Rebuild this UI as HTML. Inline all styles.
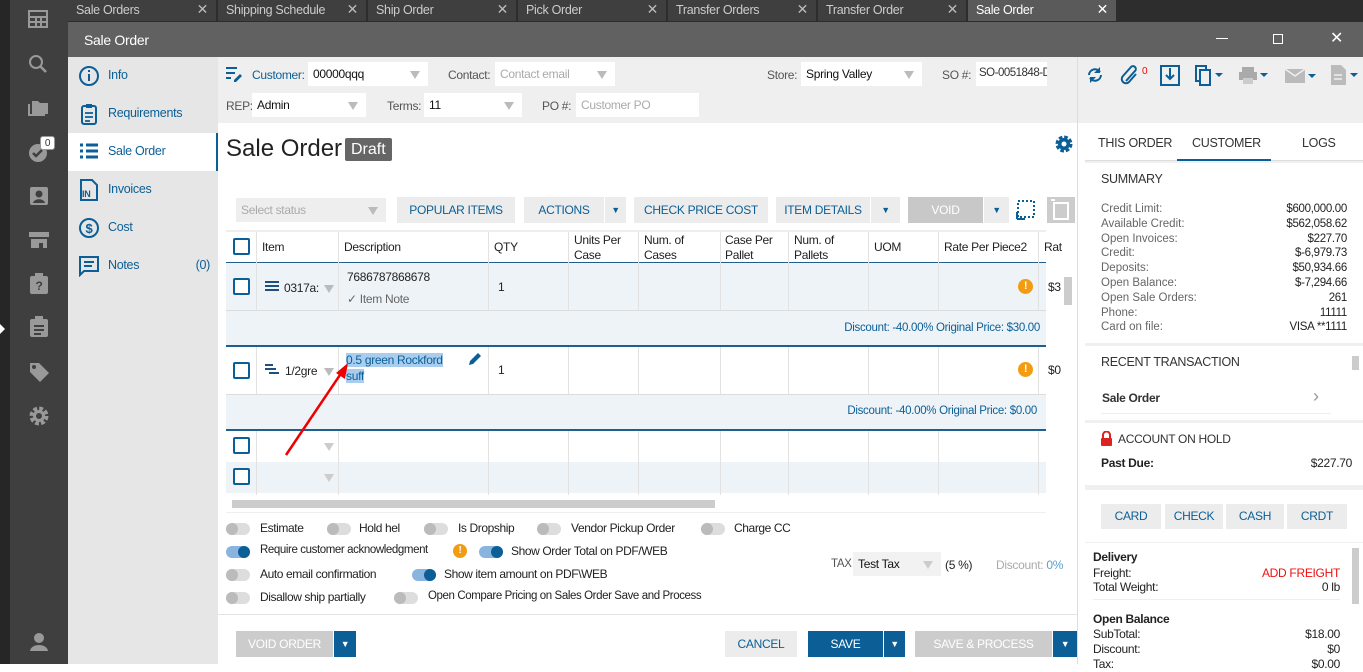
<!DOCTYPE html><html><head><meta charset="utf-8"><style>
*{box-sizing:border-box;margin:0;padding:0}
body{width:1363px;height:664px;overflow:hidden;font-family:"Liberation Sans",sans-serif;font-size:12px;background:#fff;position:relative;color:#222;white-space:nowrap;letter-spacing:-0.3px}
.a{position:absolute}
.tab{position:absolute;top:0;height:21px;width:149px;background:#3f3f3f;color:#ccc;font-size:12.5px;padding:3px 8px;border-right:1px solid #2d2d2d}
.tab .x{position:absolute;right:8px;top:1px;font-size:14px;color:#bbb}
.nav{position:absolute;left:68px;width:150px;height:38px;color:#0b5f96;font-size:12.5px;padding:11px 0 0 40px}
.nav svg{position:absolute;left:10px;top:8px}
.lbl{position:absolute;color:#555;font-size:12px}
.inp{position:absolute;background:#fff;height:24px;font-size:12px;padding:5px 5px;color:#111;overflow:hidden}
.inp .dd{position:absolute;right:8px;top:9px;width:0;height:0;border-left:5px solid transparent;border-right:5px solid transparent;border-top:8px solid #bbb}
.btn{position:absolute;top:197px;height:26px;background:#ececec;color:#0b5f96;font-size:12px;text-align:center;line-height:26px}
.cb{position:absolute;width:17px;height:17px;border:2px solid #0b5f96;border-radius:2px;background:#fff}
.th{position:absolute;top:233px;font-size:12px;color:#222;line-height:15px}
.vl{position:absolute;width:1px;background:#e2e2e2}
.tg{position:absolute;width:24px;height:12px;border-radius:6px;background:#ddd}
.tg i{position:absolute;top:0;left:0;width:12px;height:12px;border-radius:6px;background:#bbb}
.tg.on{background:#8ab4e0}.tg.on i{left:12px;background:#0b5f96}
.tl{position:absolute;font-size:12px;color:#222;letter-spacing:-0.4px}
.rp{position:absolute;font-size:11.5px;color:#666}
.rv{position:absolute;font-size:11.5px;color:#222;text-align:right}
</style></head><body>
<div class="a" style="left:0;top:0;width:10px;height:664px;background:#262626"></div>
<div class="a" style="left:10px;top:0;width:58px;height:664px;background:#3f3f3f"></div>
<div class="a" style="left:0;top:324px;width:0;height:0;border-top:5px solid transparent;border-bottom:5px solid transparent;border-left:5px solid #fff"></div>
<svg class="a" style="left:28px;top:10px" width="20" height="18"><rect x="1" y="1" width="18" height="16" fill="none" stroke="#999" stroke-width="2"/><line x1="1" y1="7" x2="19" y2="7" stroke="#999" stroke-width="2"/><line x1="1" y1="12" x2="19" y2="12" stroke="#999" stroke-width="2"/><line x1="8" y1="7" x2="8" y2="17" stroke="#999" stroke-width="2"/><line x1="13" y1="7" x2="13" y2="17" stroke="#999" stroke-width="2"/></svg>
<svg class="a" style="left:28px;top:54px" width="20" height="20"><circle cx="8" cy="8" r="6" fill="none" stroke="#999" stroke-width="2"/><line x1="12" y1="12" x2="18" y2="18" stroke="#999" stroke-width="2.5"/></svg>
<svg class="a" style="left:28px;top:98px" width="22" height="18"><path d="M4 3h6l2 2h8v11H4z" fill="#999"/><path d="M1 6v11h16" fill="none" stroke="#999" stroke-width="2"/></svg>
<svg class="a" style="left:28px;top:141px" width="22" height="22"><circle cx="10" cy="12" r="9" fill="#999"/><path d="M5 12l3 3 6-6" stroke="#3f3f3f" stroke-width="2.5" fill="none"/></svg>
<div class="a" style="left:40px;top:136px;width:15px;height:14px;background:#fff;border-radius:3px;font-size:10px;text-align:center;line-height:14px;color:#333;border:1px solid #999">0</div>
<svg class="a" style="left:29px;top:186px" width="20" height="20"><rect x="1" y="1" width="18" height="18" rx="2" fill="#999"/><circle cx="10" cy="8" r="3.5" fill="#3f3f3f"/><path d="M4 17c1-5 11-5 12 0z" fill="#3f3f3f"/></svg>
<svg class="a" style="left:28px;top:231px" width="22" height="18"><path d="M1 1h20v5H1z M3 8h16v9h-4v-5h-4v5H3z" fill="#999"/></svg>
<svg class="a" style="left:29px;top:273px" width="20" height="22"><rect x="1" y="3" width="18" height="18" rx="2" fill="#999"/><rect x="6" y="0" width="8" height="5" fill="#999"/><text x="10" y="17" font-size="12" font-weight="bold" fill="#3f3f3f" text-anchor="middle" font-family="Liberation Sans">?</text></svg>
<svg class="a" style="left:29px;top:316px" width="20" height="22"><rect x="1" y="3" width="18" height="18" rx="2" fill="#999"/><rect x="6" y="0" width="8" height="5" fill="#999"/><path d="M5 10h10M5 14h10M5 18h7" stroke="#3f3f3f" stroke-width="2"/></svg>
<svg class="a" style="left:28px;top:361px" width="22" height="22"><path d="M2 2h9l10 10-9 9L2 11z" fill="#999"/><circle cx="6" cy="6" r="2" fill="#3f3f3f"/></svg>
<svg class="a" style="left:28px;top:405px" width="22" height="22"><circle cx="11" cy="11" r="7" fill="none" stroke="#999" stroke-width="5" stroke-dasharray="3.5 2"/><circle cx="11" cy="11" r="6" fill="#999"/><circle cx="11" cy="11" r="3" fill="#3f3f3f"/></svg>
<svg class="a" style="left:29px;top:632px" width="20" height="20"><circle cx="10" cy="6" r="5" fill="#999"/><path d="M1 19c1-8 17-8 18 0z" fill="#999"/></svg>
<div class="a" style="left:68px;top:0;width:1295px;height:22px;background:#2d2d2d"></div>
<div class="tab" style="left:68px">Sale Orders<span class="x">✕</span></div>
<div class="tab" style="left:218px">Shipping Schedule<span class="x">✕</span></div>
<div class="tab" style="left:368px">Ship Order<span class="x">✕</span></div>
<div class="tab" style="left:518px">Pick Order<span class="x">✕</span></div>
<div class="tab" style="left:668px">Transfer Orders<span class="x">✕</span></div>
<div class="tab" style="left:818px">Transfer Order<span class="x">✕</span></div>
<div class="tab" style="left:968px;background:#5a5a5a;color:#fff">Sale Order<span class="x" style="color:#fff">✕</span></div>
<div class="a" style="left:68px;top:22px;width:1295px;height:35px;background:#616161;color:#fff;font-size:14px;padding:10px 16px">Sale Order</div>
<div class="a" style="left:1216px;top:38px;width:12px;height:1px;background:#fff"></div>
<div class="a" style="left:1273px;top:34px;width:10px;height:10px;border:1px solid #fff"></div>
<div class="a" style="left:1330px;top:28px;color:#fff;font-size:16px">✕</div>
<div class="a" style="left:68px;top:57px;width:150px;height:607px;background:#e6e6e6"></div>
<div class="nav" style="top:57px"><svg width="22" height="22"><circle cx="11" cy="11" r="9" fill="none" stroke="#0b5f96" stroke-width="2"/><rect x="10" y="9" width="2" height="7" fill="#0b5f96"/><rect x="10" y="5" width="2" height="2" fill="#0b5f96"/></svg>Info</div>
<div class="nav" style="top:95px"><svg width="22" height="22"><rect x="4" y="3" width="14" height="18" rx="2" fill="none" stroke="#0b5f96" stroke-width="2"/><rect x="8" y="1" width="6" height="4" fill="#0b5f96"/><path d="M7 10h8M7 14h8M7 18h5" stroke="#0b5f96" stroke-width="1.8"/></svg>Requirements</div>
<div class="nav" style="top:133px;background:#fff;border-right:2px solid #0b5f96"><svg width="22" height="22"><path d="M2 4h3M8 4h12M2 10h3M8 10h12M2 16h3M8 16h12" stroke="#0b5f96" stroke-width="3"/></svg>Sale Order</div>
<div class="nav" style="top:171px"><svg width="22" height="22"><path d="M3 1h11l5 5v15H3z" fill="none" stroke="#0b5f96" stroke-width="2"/><text x="4" y="18" font-size="9" font-weight="bold" fill="#0b5f96" font-family="Liberation Sans">IN</text></svg>Invoices</div>
<div class="nav" style="top:209px"><svg width="22" height="22"><circle cx="11" cy="11" r="9" fill="none" stroke="#0b5f96" stroke-width="2"/><text x="11" y="16" font-size="13" font-weight="bold" fill="#0b5f96" text-anchor="middle" font-family="Liberation Sans">$</text></svg>Cost</div>
<div class="nav" style="top:247px"><svg width="22" height="22"><path d="M2 2h18v14H6l-4 4z" fill="none" stroke="#0b5f96" stroke-width="2"/><path d="M6 7h10M6 11h8" stroke="#0b5f96" stroke-width="2"/></svg>Notes<span style="position:absolute;right:8px">(0)</span></div>
<div class="a" style="left:218px;top:57px;width:1145px;height:66px;background:#efefef"></div>
<div class="a" style="left:1077px;top:57px;width:1px;height:607px;background:#ddd"></div>
<svg class="a" style="left:225px;top:66px" width="18" height="16"><path d="M1 2h11M1 7h9M1 12h5" stroke="#0b5f96" stroke-width="2"/><path d="M9 14l6-6 2 2-6 6H9z" fill="#0b5f96"/></svg>
<div class="lbl" style="left:252px;top:68px;color:#0b5f96">Customer:</div>
<div class="inp" style="left:308px;top:62px;width:120px">00000qqq<span class="dd"></span></div>
<div class="lbl" style="left:448px;top:68px">Contact:</div>
<div class="inp" style="left:495px;top:62px;width:120px;color:#aaa">Contact email<span class="dd"></span></div>
<div class="lbl" style="left:767px;top:68px">Store:</div>
<div class="inp" style="left:801px;top:62px;width:121px">Spring Valley<span class="dd"></span></div>
<div class="lbl" style="left:942px;top:68px">SO #:</div>
<div class="inp" style="left:976px;top:62px;width:71px;color:#333;font-size:11.5px;padding:5px 3px;letter-spacing:-0.5px">SO-0051848-D</div>
<div class="lbl" style="left:226px;top:99px">REP:</div>
<div class="inp" style="left:252px;top:93px;width:114px">Admin<span class="dd"></span></div>
<div class="lbl" style="left:387px;top:99px">Terms:</div>
<div class="inp" style="left:424px;top:93px;width:98px">11<span class="dd"></span></div>
<div class="lbl" style="left:542px;top:99px">PO #:</div>
<div class="inp" style="left:576px;top:93px;width:123px;color:#aaa">Customer PO</div>
<svg class="a" style="left:1086px;top:66px" width="18" height="18"><path d="M3 9a6 6 0 0 1 11-3M15 9a6 6 0 0 1-11 3" fill="none" stroke="#0b5f96" stroke-width="2"/><path d="M14 1v6H8zM4 17v-6h6z" fill="#0b5f96"/></svg>
<svg class="a" style="left:1120px;top:65px" width="20" height="20"><path d="M6 16L15 6a2.5 2.5 0 0 0-4-4L3 11a4 4 0 0 0 6 6l7-8" fill="none" stroke="#0b5f96" stroke-width="2"/></svg>
<div class="a" style="left:1142px;top:66px;color:red;font-size:10px">0</div>
<svg class="a" style="left:1160px;top:64px" width="20" height="22"><rect x="1" y="2" width="18" height="19" fill="none" stroke="#0b5f96" stroke-width="2"/><path d="M10 4v11M6 11l4 4 4-4" stroke="#0b5f96" stroke-width="2" fill="none"/></svg>
<svg class="a" style="left:1195px;top:65px" width="32" height="22"><rect x="1" y="1" width="10" height="15" fill="none" stroke="#0b5f96" stroke-width="2"/><rect x="5" y="5" width="10" height="15" fill="#efefef" stroke="#0b5f96" stroke-width="2"/><path d="M20 8h8l-4 4z" fill="#0b5f96"/></svg>
<svg class="a" style="left:1238px;top:66px" width="32" height="20"><rect x="4" y="1" width="12" height="5" fill="#aaa"/><rect x="1" y="6" width="18" height="8" fill="#aaa"/><rect x="5" y="12" width="10" height="6" fill="#ccc"/><path d="M22 7h8l-4 4z" fill="#0b5f96"/></svg>
<svg class="a" style="left:1284px;top:68px" width="32" height="16"><rect x="1" y="1" width="20" height="14" fill="#bbb"/><path d="M1 1l10 7 10-7" stroke="#efefef" fill="none" stroke-width="1.5"/><path d="M24 6h8l-4 4z" fill="#0b5f96"/></svg>
<svg class="a" style="left:1330px;top:64px" width="33" height="22"><path d="M1 1h10l5 5v15H1z" fill="#bbb"/><path d="M4 11h8M4 15h8" stroke="#efefef" stroke-width="1.5"/><path d="M20 9h8l-4 4z" fill="#0b5f96"/></svg>
<div class="a" style="left:226px;top:135px;font-size:24px;color:#222;letter-spacing:0">Sale Order</div>
<div class="a" style="left:345px;top:138px;background:#666;color:#fff;font-size:16px;padding:0 6px;height:23px;line-height:23px;border-radius:2px;letter-spacing:0">Draft</div>
<svg class="a" style="left:1054px;top:134px" width="20" height="20"><circle cx="10" cy="10" r="6.5" fill="none" stroke="#0b5f96" stroke-width="4" stroke-dasharray="3.4 1.7"/><circle cx="10" cy="10" r="6" fill="#0b5f96"/><circle cx="10" cy="10" r="2.5" fill="#fff"/></svg>
<div class="inp" style="left:236px;top:198px;width:150px;background:#eee;color:#aaa;font-size:12px">Select status<span class="dd"></span></div>
<div class="btn" style="left:397px;width:118px">POPULAR ITEMS</div>
<div class="btn" style="left:524px;width:80px">ACTIONS</div>
<div class="btn" style="left:605px;width:21px;font-size:9px">▼</div>
<div class="btn" style="left:634px;width:134px">CHECK PRICE COST</div>
<div class="btn" style="left:776px;width:94px">ITEM DETAILS</div>
<div class="btn" style="left:871px;width:29px;font-size:9px">▼</div>
<div class="btn" style="left:908px;width:75px;background:#c8c8c8;color:#fff">VOID</div>
<div class="btn" style="left:984px;width:25px;font-size:9px">▼</div>
<div class="btn" style="left:1014px;width:24px;background:#fff"><svg width="20" height="22" style="margin-top:2px"><rect x="2" y="2" width="16" height="16" fill="none" stroke="#0b5f96" stroke-width="2" stroke-dasharray="2 2"/><path d="M1 20h8M1 13v7" stroke="#0b5f96" stroke-width="2"/></svg></div>
<div class="btn" style="left:1047px;width:28px;background:#ccc"><svg width="22" height="22" style="margin-top:2px"><rect x="4" y="4" width="14" height="16" fill="none" stroke="#fff" stroke-width="2"/><path d="M1 1h4" stroke="#fff" stroke-width="2"/></svg></div>
<div class="a" style="left:226px;top:230px;width:820px;height:2px;background:#eee"></div>
<div class="a" style="left:226px;top:262px;width:820px;height:48px;background:#edf3f7;border-top:1px solid #1f5f8f"></div>
<div class="a" style="left:226px;top:310px;width:820px;height:37px;background:#edf3f7;border-top:1px solid #ddd;border-bottom:2px solid #1f5f8f"></div>
<div class="a" style="left:226px;top:394px;width:820px;height:37px;background:#edf3f7;border-top:1px solid #ddd;border-bottom:2px solid #1f5f8f"></div>
<div class="a" style="left:226px;top:462px;width:820px;height:31px;background:#edf3f7"></div>
<div class="vl" style="left:256px;top:232px;height:30px"></div><div class="vl" style="left:338px;top:232px;height:30px"></div><div class="vl" style="left:488px;top:232px;height:30px"></div><div class="vl" style="left:568px;top:232px;height:30px"></div><div class="vl" style="left:638px;top:232px;height:30px"></div><div class="vl" style="left:720px;top:232px;height:30px"></div><div class="vl" style="left:788px;top:232px;height:30px"></div><div class="vl" style="left:868px;top:232px;height:30px"></div><div class="vl" style="left:938px;top:232px;height:30px"></div><div class="vl" style="left:1038px;top:232px;height:30px"></div>
<div class="vl" style="left:256px;top:262px;height:48px"></div><div class="vl" style="left:338px;top:262px;height:48px"></div><div class="vl" style="left:488px;top:262px;height:48px"></div><div class="vl" style="left:568px;top:262px;height:48px"></div><div class="vl" style="left:638px;top:262px;height:48px"></div><div class="vl" style="left:720px;top:262px;height:48px"></div><div class="vl" style="left:788px;top:262px;height:48px"></div><div class="vl" style="left:868px;top:262px;height:48px"></div><div class="vl" style="left:938px;top:262px;height:48px"></div><div class="vl" style="left:1038px;top:262px;height:48px"></div>
<div class="vl" style="left:256px;top:347px;height:47px"></div><div class="vl" style="left:338px;top:347px;height:47px"></div><div class="vl" style="left:488px;top:347px;height:47px"></div><div class="vl" style="left:568px;top:347px;height:47px"></div><div class="vl" style="left:638px;top:347px;height:47px"></div><div class="vl" style="left:720px;top:347px;height:47px"></div><div class="vl" style="left:788px;top:347px;height:47px"></div><div class="vl" style="left:868px;top:347px;height:47px"></div><div class="vl" style="left:938px;top:347px;height:47px"></div><div class="vl" style="left:1038px;top:347px;height:47px"></div>
<div class="vl" style="left:256px;top:431px;height:64px"></div><div class="vl" style="left:338px;top:431px;height:64px"></div><div class="vl" style="left:488px;top:431px;height:64px"></div><div class="vl" style="left:568px;top:431px;height:64px"></div><div class="vl" style="left:638px;top:431px;height:64px"></div><div class="vl" style="left:720px;top:431px;height:64px"></div><div class="vl" style="left:788px;top:431px;height:64px"></div><div class="vl" style="left:868px;top:431px;height:64px"></div><div class="vl" style="left:938px;top:431px;height:64px"></div><div class="vl" style="left:1038px;top:431px;height:64px"></div>
<div class="cb" style="left:233px;top:238px"></div>
<div class="th" style="left:262px;top:240px">Item</div><div class="th" style="left:344px;top:240px">Description</div><div class="th" style="left:494px;top:240px">QTY</div>
<div class="th" style="left:574px">Units Per<br>Case</div><div class="th" style="left:644px">Num. of<br>Cases</div><div class="th" style="left:725px">Case Per<br>Pallet</div><div class="th" style="left:794px">Num. of<br>Pallets</div>
<div class="th" style="left:874px;top:240px">UOM</div><div class="th" style="left:944px;top:240px">Rate Per Piece2</div><div class="th" style="left:1044px;top:240px">Rat</div>
<div class="cb" style="left:233px;top:278px"></div>
<svg class="a" style="left:265px;top:281px" width="14" height="12"><path d="M0 1h14M0 5h14M0 9h14" stroke="#1f4f7f" stroke-width="2"/></svg>
<div class="a" style="left:284px;top:281px;font-size:12px;width:36px;overflow:hidden">0317a:</div>
<div class="a" style="left:324px;top:285px;border-left:5px solid transparent;border-right:5px solid transparent;border-top:8px solid #bbb"></div>
<div class="a" style="left:347px;top:270px;font-size:12px">7686787868678</div>
<div class="a" style="left:347px;top:292px;font-size:12px;color:#666">✓ Item Note</div>
<div class="a" style="left:498px;top:280px">1</div>
<div class="a" style="left:1018px;top:279px;width:15px;height:15px;border-radius:8px;background:#f39c12;color:#fff;font-size:11px;font-weight:bold;text-align:center;line-height:15px">!</div>
<div class="a" style="left:1048px;top:280px">$3</div>
<div class="a" style="left:1040px;top:322px;color:#0b5f96;font-size:11.5px;transform:translateX(-100%)">Discount: -40.00% Original Price: $30.00</div>
<div class="cb" style="left:233px;top:362px"></div>
<svg class="a" style="left:265px;top:364px" width="14" height="12"><path d="M0 1h8M0 5h11M4 9h10" stroke="#1f4f7f" stroke-width="2"/></svg>
<div class="a" style="left:285px;top:364px;width:35px;overflow:hidden">1/2gre</div>
<div class="a" style="left:324px;top:368px;border-left:5px solid transparent;border-right:5px solid transparent;border-top:8px solid #bbb"></div>
<div class="a" style="left:346px;top:352px;font-size:12px;line-height:16px;color:#0b5f96"><span style="background:#a9cdee">0.5 green Rockford</span><br><span style="background:#a9cdee">suff</span></div>
<svg class="a" style="left:467px;top:351px" width="16" height="16"><path d="M2 14l1-4 8-8 3 3-8 8z" fill="#0b5f96"/></svg>
<div class="a" style="left:498px;top:363px">1</div>
<div class="a" style="left:1018px;top:362px;width:15px;height:15px;border-radius:8px;background:#f39c12;color:#fff;font-size:11px;font-weight:bold;text-align:center;line-height:15px">!</div>
<div class="a" style="left:1048px;top:363px">$0</div>
<div class="a" style="left:1037px;top:405px;color:#0b5f96;font-size:11.5px;transform:translateX(-100%)">Discount: -40.00% Original Price: $0.00</div>
<div class="cb" style="left:233px;top:437px"></div>
<div class="a" style="left:324px;top:443px;border-left:5px solid transparent;border-right:5px solid transparent;border-top:8px solid #ccc"></div>
<div class="cb" style="left:233px;top:468px"></div>
<div class="a" style="left:324px;top:474px;border-left:5px solid transparent;border-right:5px solid transparent;border-top:8px solid #ccc"></div>
<div class="a" style="left:232px;top:500px;width:483px;height:8px;background:#ccc"></div>
<div class="a" style="left:1064px;top:277px;width:8px;height:28px;background:#ccc"></div>
<svg class="a" style="left:226px;top:355px" width="140" height="110"><path d="M60 100L118 14" stroke="#e00" stroke-width="2.5"/><path d="M122 8l-3 16-9-6z" fill="#e00"/></svg>
<div class="a" style="left:226px;top:512px;width:820px;height:1px;background:#eee"></div>
<div class="tg" style="left:226px;top:523px"><i></i></div><div class="tl" style="left:260px;top:521px">Estimate</div>
<div class="tg" style="left:327px;top:523px"><i></i></div><div class="tl" style="left:359px;top:521px">Hold hel</div>
<div class="tg" style="left:424px;top:523px"><i></i></div><div class="tl" style="left:458px;top:521px">Is Dropship</div>
<div class="tg" style="left:537px;top:523px"><i></i></div><div class="tl" style="left:571px;top:521px">Vendor Pickup Order</div>
<div class="tg" style="left:701px;top:523px"><i></i></div><div class="tl" style="left:734px;top:521px">Charge CC</div>
<div class="tg on" style="left:226px;top:546px"><i></i></div><div class="tl" style="left:260px;top:544px;font-size:11.5px">Require customer acknowledgment</div>
<div class="a" style="left:453px;top:544px;width:14px;height:14px;border-radius:7px;background:#f39c12;color:#fff;font-size:10px;font-weight:bold;text-align:center;line-height:14px">!</div>
<div class="tg on" style="left:479px;top:546px"><i></i></div><div class="tl" style="left:511px;top:544px">Show Order Total on PDF/WEB</div>
<div class="tg" style="left:226px;top:569px"><i></i></div><div class="tl" style="left:260px;top:567px">Auto email confirmation</div>
<div class="tg on" style="left:412px;top:569px"><i></i></div><div class="tl" style="left:444px;top:567px">Show item amount on PDF\WEB</div>
<div class="tg" style="left:226px;top:592px"><i></i></div><div class="tl" style="left:260px;top:590px">Disallow ship partially</div>
<div class="tg" style="left:394px;top:592px"><i></i></div><div class="tl" style="left:428px;top:590px;font-size:11.5px">Open Compare Pricing on Sales Order Save and Process</div>
<div class="lbl" style="left:831px;top:558px;font-size:11.5px">TAX</div>
<div class="inp" style="left:853px;top:552px;width:88px;background:#f2f2f2">Test Tax<span class="dd" style="border-top-color:#ccc"></span></div>
<div class="a" style="left:945px;top:558px;font-size:12px">(5 %)</div>
<div class="a" style="left:996px;top:558px;font-size:12px;color:#aaa">Discount: <span style="color:#5aa0d0">0%</span></div>
<div class="a" style="left:218px;top:614px;width:859px;height:1px;background:#e4e4e4"></div>
<div class="a" style="left:236px;top:631px;width:97px;height:26px;background:#ccc;color:#fff;text-align:center;line-height:26px">VOID ORDER</div>
<div class="a" style="left:334px;top:631px;width:22px;height:26px;background:#0b5f96;color:#fff;text-align:center;line-height:26px;font-size:9px">▼</div>
<div class="a" style="left:725px;top:631px;width:72px;height:26px;background:#ececec;color:#0b5f96;text-align:center;line-height:26px">CANCEL</div>
<div class="a" style="left:808px;top:631px;width:75px;height:26px;background:#0b5f96;color:#fff;text-align:center;line-height:26px">SAVE</div>
<div class="a" style="left:884px;top:631px;width:21px;height:26px;background:#0b5f96;color:#fff;text-align:center;line-height:26px;font-size:9px">▼</div>
<div class="a" style="left:915px;top:631px;width:137px;height:26px;background:#ccc;color:#fff;text-align:center;line-height:26px">SAVE &amp; PROCESS</div>
<div class="a" style="left:1053px;top:631px;width:24px;height:26px;background:#0b5f96;color:#fff;text-align:center;line-height:26px;font-size:9px">▼</div>
<div class="a" style="left:1085px;top:123px;width:278px;height:541px;background:#f0f0f0"></div>
<div class="a" style="left:1085px;top:123px;width:278px;height:38px;background:#fff;border-bottom:1px solid #ddd"></div>
<div class="a" style="left:1098px;top:136px;font-size:12.5px;color:#333">THIS ORDER</div>
<div class="a" style="left:1192px;top:136px;font-size:12.5px;color:#333">CUSTOMER</div>
<div class="a" style="left:1177px;top:159px;width:94px;height:2px;background:#0b5f96"></div>
<div class="a" style="left:1302px;top:136px;font-size:12.5px;color:#333">LOGS</div>
<div class="a" style="left:1085px;top:163px;width:278px;height:180px;background:#fff"></div>
<div class="a" style="left:1101px;top:172px;font-size:12.5px;color:#333">SUMMARY</div>
<div class="rp" style="left:1101px;top:202px;line-height:14.8px;letter-spacing:0">Credit Limit:<br>Available Credit:<br>Open Invoices:<br>Credit:<br>Deposits:<br>Open Balance:<br>Open Sale Orders:<br>Phone:<br>Card on file:</div>
<div class="rv" style="left:1247px;width:100px;top:202px;line-height:14.8px">$600,000.00<br>$562,058.62<br>$227.70<br>$-6,979.73<br>$50,934.66<br>$-7,294.66<br>261<br>11111<br>VISA **1111</div>
<div class="a" style="left:1085px;top:346px;width:278px;height:74px;background:#fff"></div>
<div class="a" style="left:1101px;top:355px;font-size:12.5px;color:#333">RECENT TRANSACTION</div>
<div class="a" style="left:1102px;top:391px;font-size:12px;font-weight:bold;color:#333">Sale Order</div>
<div class="a" style="left:1313px;top:386px;font-size:18px;color:#999">›</div>
<div class="a" style="left:1101px;top:413px;width:230px;height:1px;background:#eee"></div>
<div class="a" style="left:1352px;top:356px;width:7px;height:14px;background:#ccc"></div>
<div class="a" style="left:1085px;top:423px;width:278px;height:62px;background:#fff"></div>
<svg class="a" style="left:1100px;top:431px" width="13" height="15"><path d="M3 7V4a3.5 3.5 0 0 1 7 0v3" fill="none" stroke="#d22" stroke-width="2"/><rect x="1" y="7" width="11" height="8" rx="1" fill="#d22"/></svg>
<div class="a" style="left:1118px;top:432px;font-size:12px;color:#333">ACCOUNT ON HOLD</div>
<div class="a" style="left:1101px;top:456px;font-size:12px;font-weight:bold;color:#222">Past Due:</div>
<div class="a" style="left:1352px;top:456px;font-size:12px;transform:translateX(-100%)">$227.70</div>
<div class="a" style="left:1085px;top:490px;width:278px;height:52px;background:#fff"></div>
<div class="a" style="left:1101px;top:504px;width:60px;height:25px;background:#ececec;color:#0b5f96;text-align:center;line-height:25px">CARD</div>
<div class="a" style="left:1165px;top:504px;width:58px;height:25px;background:#ececec;color:#0b5f96;text-align:center;line-height:25px">CHECK</div>
<div class="a" style="left:1226px;top:504px;width:58px;height:25px;background:#ececec;color:#0b5f96;text-align:center;line-height:25px">CASH</div>
<div class="a" style="left:1287px;top:504px;width:60px;height:25px;background:#ececec;color:#0b5f96;text-align:center;line-height:25px">CRDT</div>
<div class="a" style="left:1085px;top:543px;width:278px;height:121px;background:#fff"></div>
<div class="a" style="left:1093px;top:550px;font-size:12px;font-weight:bold;color:#222">Delivery</div>
<div class="a" style="left:1093px;top:566px;font-size:12px">Freight:</div>
<div class="a" style="left:1340px;top:566px;font-size:12px;color:#e11;transform:translateX(-100%)">ADD FREIGHT</div>
<div class="a" style="left:1093px;top:580px;font-size:12px">Total Weight:</div>
<div class="a" style="left:1340px;top:580px;font-size:12px;transform:translateX(-100%)">0 lb</div>
<div class="a" style="left:1093px;top:599px;width:247px;height:1px;background:#eee"></div>
<div class="a" style="left:1093px;top:612px;font-size:12px;font-weight:bold;color:#222">Open Balance</div>
<div class="a" style="left:1093px;top:627px;font-size:12px;line-height:15px">SubTotal:<br>Discount:<br>Tax:</div>
<div class="a" style="left:1290px;top:627px;width:50px;text-align:right;font-size:12px;line-height:15px">$18.00<br>$0<br>$0.00</div>
<div class="a" style="left:1352px;top:548px;width:7px;height:56px;background:#ccc"></div>
</body></html>
